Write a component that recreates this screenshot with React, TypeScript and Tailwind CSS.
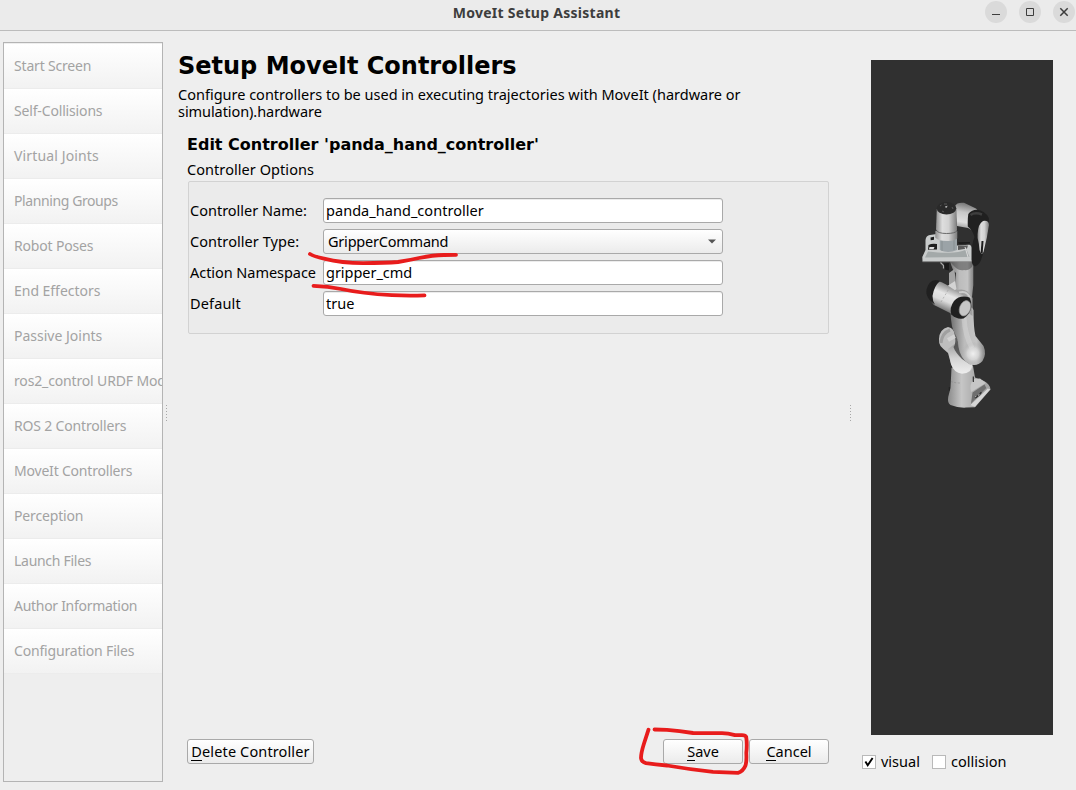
import type { ReactNode } from "react";

const steps: { label: string; tracking: string }[] = [
  { label: "Start Screen", tracking: "tracking-[-0.18px]" },
  { label: "Self-Collisions", tracking: "tracking-[-0.16px]" },
  { label: "Virtual Joints", tracking: "tracking-[0.14px]" },
  { label: "Planning Groups", tracking: "tracking-[-0.4px]" },
  { label: "Robot Poses", tracking: "tracking-[-0.17px]" },
  { label: "End Effectors", tracking: "tracking-[-0.03px]" },
  { label: "Passive Joints", tracking: "tracking-[0px]" },
  { label: "ros2_control URDF Modifications", tracking: "tracking-[-0.15px]" },
  { label: "ROS 2 Controllers", tracking: "tracking-[-0.17px]" },
  { label: "MoveIt Controllers", tracking: "tracking-[-0.2px]" },
  { label: "Perception", tracking: "tracking-[-0.16px]" },
  { label: "Launch Files", tracking: "tracking-[-0.28px]" },
  { label: "Author Information", tracking: "tracking-[-0.29px]" },
  { label: "Configuration Files", tracking: "tracking-[-0.17px]" },
];

function TitleBar() {
  return (
    <header className="grid h-[31px] shrink-0 grid-cols-[1fr_auto_1fr] border-b border-[#bcbcbc] bg-[#ebebeb]">
      <div />
      <h1 className="-ml-[3px] pt-[3px] text-[14px] leading-5 font-bold tracking-[0.28px] text-[#3d3d3d]">MoveIt Setup Assistant</h1>
      <div className="mr-[1px] flex justify-end gap-3 pt-[1px]">
        <button className="h-[22px] w-[22px] rounded-full bg-[#dadada]">
          <svg viewBox="0 0 22 22" className="h-[22px] w-[22px]"><path d="M7 13.5h8" stroke="#3d3d3d" /></svg>
        </button>
        <button className="h-[22px] w-[22px] rounded-full bg-[#dadada]">
          <svg viewBox="0 0 22 22" className="h-[22px] w-[22px]"><path d="M7.5 7.5h7v7h-7z" fill="none" stroke="#3d3d3d" /></svg>
        </button>
        <button className="h-[22px] w-[22px] rounded-full bg-[#dadada]">
          <svg viewBox="0 0 22 22" className="h-[22px] w-[22px]"><path d="M7.3 7.3l7.4 7.4M14.7 7.3l-7.4 7.4" stroke="#3d3d3d" strokeWidth="1.5" /></svg>
        </button>
      </div>
    </header>
  );
}

function Sidebar() {
  return (
    <nav className="mt-[11px] mb-2 w-40 shrink-0 overflow-hidden border border-[#b4b4b4] bg-[#eeeeee] pt-px">
      {steps.map((s) => (
        <div
          key={s.label}
          className="flex h-[45px] items-center overflow-hidden border-b border-[#ececec] bg-linear-to-b from-white to-[#f2f2f2] pb-[2px] pl-[10px] text-[14px] whitespace-nowrap text-[#a3a3a3]"
        >
          <span className={s.tracking}>{s.label}</span>
        </div>
      ))}
    </nav>
  );
}

function Splitter({ className }: { className: string }) {
  return (
    <div className={"flex shrink-0 flex-col items-center gap-[2px] pt-[374px] " + className}>
      {[0, 1, 2, 3, 4, 5].map((i) => (
        <i key={i} className="h-px w-px bg-[#a8a8a8]" />
      ))}
    </div>
  );
}

function Row({ label, tracking, children }: { label: string; tracking: string; children: ReactNode }) {
  return (
    <div className="flex h-[25px] items-center">
      <label className={"w-[133px] shrink-0 whitespace-nowrap " + tracking}>{label}</label>
      {children}
    </div>
  );
}

function Field({ value, tracking }: { value: string; tracking: string }) {
  return (
    <div className={"flex h-[25px] w-[400px] items-center rounded-[3px] border border-[#a9a9a9] bg-white pl-[2px] shadow-[inset_0_1px_0_#ececec] " + tracking}>
      {value}
    </div>
  );
}

function PushButton({ mnemonic, rest, className }: { mnemonic: string; rest: string; className: string }) {
  return (
    <button
      className={"flex h-[25px] items-center justify-center rounded-[3px] border border-[#a9a9a9] bg-linear-to-b from-white to-[#ebebeb] whitespace-nowrap " + className}
    >
      <span className="h-[19px] border-b border-black leading-[18px]">{mnemonic}</span>
      <span className="h-[19px] leading-[18px]">{rest}</span>
    </button>
  );
}

function RobotArm() {
  return (
    <svg viewBox="871 60 182 675" className="block h-[675px] w-[182px]">
      <defs>
        <linearGradient id="cyl" x1="0" x2="1">
          <stop offset="0" stopColor="#8e8e8e" />
          <stop offset="0.3" stopColor="#dedede" />
          <stop offset="0.6" stopColor="#d2d2d2" />
          <stop offset="1" stopColor="#7d7d7d" />
        </linearGradient>
        <linearGradient id="column" x1="0" x2="1">
          <stop offset="0" stopColor="#707070" />
          <stop offset="0.4" stopColor="#bcbcbc" />
          <stop offset="0.75" stopColor="#c4c4c4" />
          <stop offset="1" stopColor="#858585" />
        </linearGradient>
        <linearGradient id="fore" gradientUnits="userSpaceOnUse" x1="951" y1="286" x2="941" y2="311">
          <stop offset="0" stopColor="#8a8a8a" />
          <stop offset="0.35" stopColor="#e6e6e6" />
          <stop offset="0.6" stopColor="#dcdcdc" />
          <stop offset="1" stopColor="#666666" />
        </linearGradient>
        <linearGradient id="wrist" gradientUnits="userSpaceOnUse" x1="966" y1="203" x2="961" y2="230">
          <stop offset="0" stopColor="#747474" />
          <stop offset="0.35" stopColor="#c8c8c8" />
          <stop offset="0.7" stopColor="#dedede" />
          <stop offset="1" stopColor="#8a8a8a" />
        </linearGradient>
        <linearGradient id="shoulder" x1="0" y1="0" x2="0" y2="1">
          <stop offset="0" stopColor="#9c9c9c" />
          <stop offset="0.5" stopColor="#d4d4d4" />
          <stop offset="1" stopColor="#eeeeee" />
        </linearGradient>
        <radialGradient id="bulb" cx="0.5" cy="0.55" r="0.5">
          <stop offset="0" stopColor="#f0f0f0" />
          <stop offset="0.5" stopColor="#dadada" stopOpacity="0.8" />
          <stop offset="1" stopColor="#a0a0a0" stopOpacity="0" />
        </radialGradient>
        <linearGradient id="base" gradientUnits="userSpaceOnUse" x1="948" y1="0" x2="978" y2="0">
          <stop offset="0" stopColor="#8c8c8c" />
          <stop offset="0.45" stopColor="#c6c6c6" />
          <stop offset="0.75" stopColor="#b4b4b4" />
          <stop offset="1" stopColor="#a4a4a4" />
        </linearGradient>
      </defs>

      {/* base and foot */}
      <path d="M951.5 368L950.5 388Q949 394 948.2 397Q947.2 403 950.5 405Q958 408 966 407.6L975 407.3L990.5 389.5Q990 384 984 381L975 377.5L973 366Z" fill="url(#base)" />
      <path d="M971 392Q969 384 974 379L980 378.5L986 383Z" fill="#c6c6c6" />
      <path d="M972.5 392.5L984.5 384.5L986.3 388L971 403.5Z" fill="#6f6f6f" />
      <path d="M974.5 397l2.5-2 1 .5 2.5-3.5 1.5.5-1 2.5-3.5 2.5-2 1z" fill="#303030" />
      <path d="M975 397l1.5-1M978 395.5l1.5-1" stroke="#dddddd" strokeWidth="0.8" />
      <path d="M970 405L987.5 388.5L990.3 389.3L975 406.8Z" fill="#d6d6d6" />
      <path d="M970.5 404.5L987.3 388.3" stroke="#909090" strokeWidth="0.7" fill="none" />
      <path d="M949.3 387v3.5M973.3 376.5v5.5" stroke="#222222" strokeWidth="1.1" />
      <path d="M951 381.5Q955 383 960 383" stroke="#8a8a8a" strokeWidth="0.6" strokeDasharray="2 1.5" fill="none" />

      {/* shoulder */}
      <path d="M939 339Q939.5 329 948 327Q953 327.5 955 334L962 350L972.5 363V369Q970 373.5 962 373.5Q954 373 951 364L948 353Q943 349 940.5 346Q938.7 343 939 339Z" fill="#bebebe" />
      <path d="M948 349L956 343L972.5 364Q972 373.7 962 373.7Q954 373 951 364Z" fill="url(#shoulder)" />
      <path d="M954 332Q959 341 959 348Q963 357 971 365L962 359Q955 352 953.5 347Q957 343 954 332Z" fill="#3c3c3c" opacity="0.75" />
      <path d="M941 343Q942 333 950 330" stroke="#a0a0a0" strokeWidth="3" fill="none" />
      <path d="M948 340L955 336" stroke="#dadada" strokeWidth="4" opacity="0.7" fill="none" />

      {/* upper arm */}
      <path d="M950.5 312Q951 328 955 334Q958.5 340 958.5 347Q960 358 969 364Q977 367 982.5 361Q987 354 983.5 346L975.5 336Q973.5 328 973.5 310L965 296Z" fill="url(#column)" />
      <ellipse cx="973" cy="352.5" rx="11.5" ry="12" fill="url(#bulb)" />
      <path d="M964 318Q965 335 972 348" stroke="#e2e2e2" strokeWidth="5" opacity="0.35" fill="none" />

      {/* elbow column */}
      <path d="M950 261Q952 270 956 273L955 284L954 291L972 297L973.3 285V260Z" fill="url(#column)" />
      <path d="M949 273L954.5 269L956 287L949 290Z" fill="#a4a4a4" />
      <path d="M942 289.5L955 281L956.5 289L950 294Z" fill="#d4d4d4" />
      <path d="M950 261Q957 272 964 270Q971 271 973.3 264V260H950Z" fill="#4b4b4b" opacity="0.55" />
      <path d="M955 291Q966 286 972.5 298L972.5 316L959 306Z" fill="#a0a0a0" />
      <path d="M959 292.5Q967 290 970 298" stroke="#cccccc" strokeWidth="2" fill="none" />

      {/* forearm */}
      <path d="M936 280.5Q942 281.5 947 285L963 295.5Q968 298 969 300L963 318Q957 317.5 952 314L934 305Q929 300 929 292Z" fill="url(#fore)" />
      <path d="M940 281Q934 278.5 929.5 283Q925.5 289 926.5 294Q928 300 935 304.8Q932.5 301 932.5 296Q934 286 940 281Z" fill="#202020" />
      <path d="M969.5 297.5Q960 294.5 954 301Q949 308 951.3 314.5Q956 319.5 963.5 318.5Q969.5 315 971.5 307Q971.5 301 969.5 297.5Z" fill="#202020" />
      <ellipse cx="965" cy="308.3" rx="5.4" ry="8" transform="rotate(22 965 308.3)" fill="#c6c6c6" stroke="#909090" strokeWidth="0.6" />
      <path d="M941 302L950 287" stroke="#999999" strokeWidth="0.6" strokeDasharray="2 2" />

      {/* wrist link */}
      <path d="M955 206Q957 202 964 202.8L976 208.5L981 214L975 232L968 228L957 226Z" fill="url(#wrist)" />
      <path d="M968.3 214Q971 210 977 209.8Q985 210.5 988.8 218Q989.5 224 987 237Q984.5 250 982 257Q980 265 975 266.5Q971.3 265 971.5 258Q971.5 244 974.5 237Q972.5 230 967.8 226.5Q967.5 219 968.3 214Z" fill="#202020" />
      <path d="M977.6 234Q978 224 983 221Q988.8 220 989 225L986.8 238L983.5 252Q981.5 256 979.5 250Q979 243 977.6 238Z" fill="url(#cyl)" />
      <path d="M982.5 241l-.8 12" stroke="#1c1c1c" strokeWidth="2" fill="none" />
      <path d="M970.5 215Q975 212 982 214.5" stroke="#3e3e3e" strokeWidth="2.5" fill="none" />

      {/* gripper hand */}
      <path d="M957 245.5L969 244.8Q971.5 245 971.5 248V261.5L922.5 261.5L922.3 257L925.5 250V240Q926 235.5 930 235L940 233.5L944 246Z" fill="#c9cccc" />
      <path d="M928 251.5Q940 253 948 252.8Q958 253 966.5 249.5L969.5 257L925 257.5Z" fill="#a3a9a9" />
      <path d="M928.5 245Q932 243 937 244V249.5L928 249.8Z" fill="#1f1f1f" />
      <path d="M929.5 247h5l-1 2.3h-4.5z" fill="#dddddd" />
      <path d="M930.5 237.5l3.5-.8v3l-3.3.5zM958 242.3l12-.3v1.6l-11 .4z" fill="#1c1c1c" />
      <path d="M958 245.5h10l-1 3-9 1.5z" fill="#5a5a5a" />
      <path d="M965 247l3 10" stroke="#dcdcdc" strokeWidth="1" />
      <path d="M922.5 261.7H971.5" stroke="#8c8c8c" strokeWidth="0.7" fill="none" />
      <path d="M943.5 263.5l5.5-.5v7.5l-4-1z" fill="#1a1a1a" />
      <path d="M940.5 262.5l3 3v3" stroke="#a8a8a8" strokeWidth="1.2" fill="none" />

      {/* flange and head */}
      <path d="M939.8 238H957V250Q948 254 939.8 250Z" fill="#9ba3a7" />
      <path d="M942 240v11M954 240v10" stroke="#7e868a" strokeWidth="0.7" />
      <path d="M935.3 231H957.3V238.5Q953 241.5 947 241Q938 241 935.3 237.5Z" fill="url(#cyl)" />
      <path d="M936.8 209L936 229.5Q938 233 946.5 233.3Q955 233.3 957 230.5L956.5 209Z" fill="url(#cyl)" />
      <path d="M935.8 230Q938 233.5 946.5 233.5Q955 233.5 957 230.8" stroke="#5f5f5f" strokeWidth="0.9" fill="none" />
      <ellipse cx="946.5" cy="208.3" rx="9.8" ry="6.2" fill="#2a2a2a" />
      <path d="M940 206l1.5-1M944 204h3M952 207l1 2M945 207l3-1M942 211l2 1" stroke="#7a7a7a" strokeWidth="0.6" />
      <circle cx="946.2" cy="206.8" r="0.9" fill="#bcbcbc" />
    </svg>
  );
}

function Annotations() {
  return (
    <svg viewBox="0 0 1076 790" className="pointer-events-none absolute inset-0 h-[790px] w-[1076px]">
      <g fill="none" stroke="#e81c1c" strokeWidth="3.8" strokeLinecap="round" strokeLinejoin="round">
        <path d="M310 254Q314 256.6 324 258.6Q342 263 363 263.2Q386 263 398 262Q408 260.5 419 258Q433 255 444 255L456 254.8" />
        <path d="M313.5 285.8Q328 286 341 289Q362 293.5 392 295.2Q408 296 424.5 295.4" />
        <path d="M648.5 729.7L644 743.5Q641 753 641 758Q641.5 762 646 763.2Q655 764.5 667 765.5Q690 769.5 713 771.8L738 772.8Q743 771.5 745.5 765.5Q746.8 761 746.3 753Q747.3 744 746.2 737Q745.5 735.2 742 735.2H735Q728 733.2 722 733.2L693 733Q679 730.8 667 729.8L654.5 729.5" />
      </g>
    </svg>
  );
}

export default function App() {
  return (
    <div className="relative flex h-[790px] w-[1076px] flex-col overflow-hidden bg-[#eeeeee] font-['Noto_Sans',sans-serif] text-[14.5px] text-black">
      <TitleBar />
      <div className="flex min-h-0 flex-1 pl-[3px]">
        <Sidebar />
        <Splitter className="w-[7px]" />

        <main className="flex w-[676px] shrink-0 flex-col pl-2">
          <h2 className="mt-[19px] font-['DejaVu_Sans',sans-serif] text-[24px] leading-8 font-bold whitespace-nowrap">Setup MoveIt Controllers</h2>
          <div className="mt-1 leading-[17px] whitespace-nowrap">
            <p>Configure controllers to be used in executing trajectories with MoveIt (hardware or</p>
            <p className="tracking-[-0.07px]">simulation).hardware</p>
          </div>
          <section className="flex min-h-0 flex-1 flex-col pl-[9px]">
            <h3 className="mt-[13px] font-['DejaVu_Sans',sans-serif] text-[16px] leading-6 font-bold whitespace-nowrap">
              Edit Controller 'panda_hand_controller'
            </h3>
            <div className="mt-[2px] leading-5 tracking-[0.06px]">Controller Options</div>
            <div className="mt-[2px] ml-px flex h-[153px] w-[641px] flex-col gap-[6px] rounded-[2px] border border-[#d2d2d2] bg-[#ebebeb] pt-4 pl-px">
              <Row label="Controller Name:" tracking="tracking-[0px]">
                <Field value="panda_hand_controller" tracking="tracking-[0.04px]" />
              </Row>
              <Row label="Controller Type:" tracking="tracking-[0.06px]">
                <div className="flex h-[25px] w-[400px] items-center justify-between rounded-[3px] border border-[#a9a9a9] bg-linear-to-b from-white to-[#ebebeb] pr-[6px] pl-1">
                  <span className="tracking-[-0.22px]">GripperCommand</span>
                  <svg viewBox="0 0 8 5" className="h-[5px] w-2"><path d="M0 0.5H8L4 4.5Z" fill="#555555" /></svg>
                </div>
              </Row>
              <Row label="Action Namespace" tracking="tracking-[-0.05px]">
                <Field value="gripper_cmd" tracking="tracking-[-0.03px]" />
              </Row>
              <Row label="Default" tracking="tracking-[0.15px]">
                <Field value="true" tracking="tracking-[0px]" />
              </Row>
            </div>
            <div className="mt-auto mb-[26px] flex items-center">
              <PushButton mnemonic="D" rest="elete Controller" className="w-[127px] tracking-[0.13px]" />
              <PushButton mnemonic="S" rest="ave" className="ml-[349px] w-20" />
              <PushButton mnemonic="C" rest="ancel" className="ml-[6px] w-20" />
            </div>
          </section>
        </main>

        <Splitter className="w-[9px]" />

        <aside className="flex w-[206px] shrink-0 flex-col pl-[7px]">
          <div className="mt-[29px] ml-[9px] h-[675px] w-[182px] shrink-0 bg-[#303030]">
            <RobotArm />
          </div>
          <div className="mt-4 flex h-[21px] items-center">
            <span className="flex h-[14px] w-[14px] items-center justify-center border border-[#b9b9b9] bg-white">
              <svg viewBox="0 0 12 12" className="h-3 w-3"><path d="M2.4 5.5L4.7 9.3L9.6 2" fill="none" stroke="#000000" strokeWidth="1.9" /></svg>
            </span>
            <span className="ml-[5px] w-[51px]">visual</span>
            <span className="h-[14px] w-[14px] border border-[#b9b9b9] bg-white" />
            <span className="ml-[5px]">collision</span>
          </div>
        </aside>
      </div>
      <Annotations />
    </div>
  );
}
